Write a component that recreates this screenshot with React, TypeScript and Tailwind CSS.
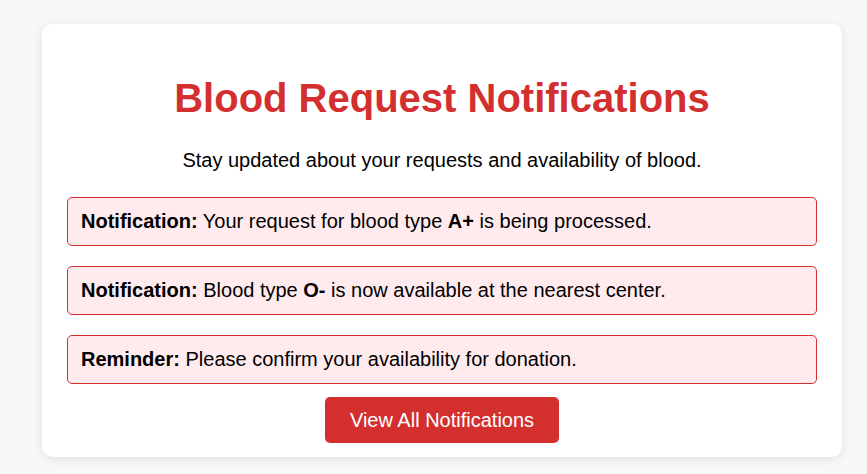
import React from 'react';

interface Notice {
  id: string;
  label: string;
  parts: React.ReactNode;
}

const notices: Notice[] = [
  {
    id: '1',
    label: 'Notification:',
    parts: (
      <>
        Your request for blood type <b>A+</b> is being processed.
      </>
    ),
  },
  {
    id: '2',
    label: 'Notification:',
    parts: (
      <>
        Blood type <b>O-</b> is now available at the nearest center.
      </>
    ),
  },
  {
    id: '3',
    label: 'Reminder:',
    parts: <>Please confirm your availability for donation.</>,
  },
];

const App: React.FC = () => {
  return (
    <div className="min-h-screen bg-[#f8f8f8] pt-[24px] pl-[42px] font-['Liberation_Sans',Arial,sans-serif] text-black">
      <div className="w-[800px] bg-white rounded-[10px] shadow-[0_2px_10px_rgba(0,0,0,0.1)] px-[25px] pt-[51px] pb-[14px]">
        <h1 className="text-center text-[40px] leading-[46px] font-bold text-[#d32f2f]">
          Blood Request Notifications
        </h1>
        <p className="text-center text-[20px] leading-[23px] mt-[28px]">
          Stay updated about your requests and availability of blood.
        </p>

        <div className="mt-[25px] flex flex-col gap-[20px]">
          {notices.map((n) => (
            <div
              key={n.id}
              className="bg-[#ffebee] border border-[#d32f2f] rounded-[5px] px-[13px] py-[12px] text-[20px] leading-[23px]"
            >
              <b>{n.label}</b> {n.parts}
            </div>
          ))}
        </div>

        <div className="flex justify-center mt-[13px]">
          <button className="bg-[#d32f2f] text-white text-[20px] leading-[24px] px-[25px] py-[11px] rounded-[5px]">
            View All Notifications
          </button>
        </div>
      </div>
    </div>
  );
};

export default App;
